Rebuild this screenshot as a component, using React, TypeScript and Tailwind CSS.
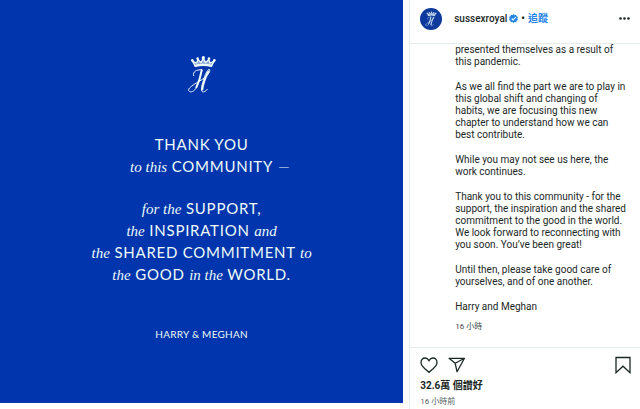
import type { ReactNode } from "react";

interface ChildrenProps {
  children: ReactNode;
}

const caption: string[][] = [
  ["presented themselves as a result of", "this pandemic."],
  [
    "As we all find the part we are to play in",
    "this global shift and changing of",
    "habits, we are focusing this new",
    "chapter to understand how we can",
    "best contribute.",
  ],
  ["While you may not see us here, the", "work continues."],
  [
    "Thank you to this community - for the",
    "support, the inspiration and the shared",
    "commitment to the good in the world.",
    "We look forward to reconnecting with",
    "you soon. You’ve been great!",
  ],
  [
    "Until then, please take good care of",
    "yourselves, and of one another.",
  ],
  ["Harry and Meghan"],
];

const Monogram: React.FC<{ className: string }> = ({ className }) => (
  <svg
    viewBox="48 30 90 120"
    className={className}
    fill="none"
    stroke="currentColor"
    strokeLinecap="round"
    strokeLinejoin="round"
    aria-hidden="true"
  >
    {/* Crown */}
    <path
      d="M72 62 L64 48 L77 54 L81 43 L90 53 L97 40 L104 53 L113 43 L117 54 L130 48 L122 62 Q97 55 72 62Z"
      fill="currentColor"
      fillOpacity="0.6"
      strokeWidth="4"
    />
    <path d="M73 63 Q97 57 121 63" strokeWidth="6" />
    <g fill="currentColor" stroke="none">
      <circle cx="64" cy="46" r="4" />
      <circle cx="80" cy="41" r="4" />
      <circle cx="97" cy="38" r="5" />
      <circle cx="114" cy="41" r="4" />
      <circle cx="130" cy="46" r="4" />
    </g>
    {/* Cipher */}
    <path
      d="M68 92 C64 80 76 74 93 74 C90 92 84 112 77 126 C71 139 58 145 53 137 C51 130 63 122 76 114 C91 106 102 98 110 89 C116 82 118 75 115 73 C109 73 101 91 97 107 C92 122 89 136 94 140 C98 143 105 138 109 133"
      strokeWidth="3"
    />
    <path d="M92 76 C89 92 83 112 76 127" strokeWidth="6" />
    <path d="M112 80 C104 96 96 115 94 133" strokeWidth="6" />
  </svg>
);

const Small: React.FC<ChildrenProps> = ({ children }) => (
  <em className="font-['Liberation_Serif',serif] leading-none tracking-normal">
    {children}
  </em>
);

const Card = () => (
  <section className="flex aspect-square flex-col items-center bg-[#0035ad] pt-[55px] text-center font-[Lato,sans-serif] text-[#eefaf6]">
    <Monogram className="h-10 w-[30px]" />
    <div className="mt-[38px] text-[15px] leading-[22px] tracking-wider whitespace-nowrap">
      <p>THANK YOU</p>
      <p>
        <Small>to this</Small> COMMUNITY
        <span className="inline-block w-0 font-light">&nbsp;—</span>
      </p>
    </div>
    <div className="mt-5 text-[15px] leading-[22px] tracking-wider whitespace-nowrap">
      <p>
        <Small>for the</Small> SUPPORT,
      </p>
      <p>
        <Small>the</Small> INSPIRATION <Small>and</Small>
      </p>
      <p>
        <Small>the</Small> SHARED COMMITMENT <Small>to</Small>
      </p>
      <p>
        <Small>the</Small> GOOD <Small>in the</Small> WORLD.
      </p>
    </div>
    <p className="mt-10 text-[10px] leading-[18px] tracking-wide">
      HARRY &amp; MEGHAN
    </p>
  </section>
);

const Header = () => (
  <header className="flex h-11 items-center border-b border-[#e4ecea] pr-[10px] pb-[6px] pl-[10px]">
    <span className="flex h-[22px] w-[22px] items-center justify-center rounded-full bg-[#0d3a9c] text-[#e2f4fa]">
      <Monogram className="h-4 w-3" />
    </span>
    <a href="#profile" className="ml-3 text-[10px] font-medium">
      sussexroyal
    </a>
    <svg viewBox="0 0 24 24" className="ml-[2px] h-[9px] w-[9px]" role="img" aria-label="Verified">
      <path
        d="M12 0l3 3 4-1 1 4 4 2-2 4 2 4-4 2-1 4-4-1-3 3-3-3-4 1-1-4-4-2 2-4-2-4 4-2 1-4 4 1z"
        fill="#2583e6"
      />
      <path d="M7 12l4 4 7-8" fill="none" stroke="#fff" strokeWidth="3" />
    </svg>
    <span className="mx-[3px] text-[10px] font-bold">•</span>
    <button className="text-[10px] font-semibold text-[#2583e6]">追蹤</button>
    <button className="ml-auto" aria-label="More options">
      <svg viewBox="0 0 11 3" className="h-[3px] w-[11px]" fill="currentColor">
        <circle cx="1.5" cy="1.5" r="1.3" />
        <circle cx="5.5" cy="1.5" r="1.3" />
        <circle cx="9.5" cy="1.5" r="1.3" />
      </svg>
    </button>
  </header>
);

const Actions = () => (
  <footer className="border-t border-[#e4ecea] pt-2 pr-2 pl-[10px]">
    <div className="flex items-center">
      <button aria-label="Like">
        <svg viewBox="0 0 18 18" className="h-[18px] w-[18px]" fill="none" stroke="currentColor" strokeWidth="1.3">
          <path d="M9 4.7C8.1 3 6.8 2 5.1 2 2.7 2 1 3.9 1 6.5c0 2.9 2 4.5 4.3 6.6L9 16.3l3.7-3.2C15 11 17 9.4 17 6.5 17 3.9 15.3 2 12.9 2 11.2 2 9.9 3 9 4.7z" />
        </svg>
      </button>
      <button className="ml-[10px]" aria-label="Share">
        <svg
          viewBox="0 0 18 18"
          className="h-[18px] w-[18px]"
          fill="none"
          stroke="currentColor"
          strokeWidth="1.3"
          strokeLinejoin="round"
        >
          <path d="M1 2.3h15.5L9 15.7 7.2 7.3zM7.2 7.3l9.3-5" />
        </svg>
      </button>
      <button className="ml-auto" aria-label="Save">
        <svg viewBox="0 0 18 18" className="h-[18px] w-[18px]" fill="none" stroke="currentColor" strokeWidth="1.3">
          <path d="M2 1.5h14v15.2l-7-6.5-7 6.5z" />
        </svg>
      </button>
    </div>
    <p className="mt-1 text-[10px] leading-4 font-bold">32.6萬 個讚好</p>
    <p className="text-[8px] leading-4 text-[#56625f]">16 小時前</p>
  </footer>
);

const App = () => {
  return (
    <main className="grid grid-cols-[63%_1fr] items-start gap-[6px] overflow-hidden bg-white">
      <Card />
      <article className="border-l border-[#e4f2f0] font-[Roboto,'Noto_Sans_CJK_TC',sans-serif] text-[#1b2826]">
        <Header />
        <div className="pr-2 pl-[45px]">
          <div className="flex flex-col gap-[13px] text-[10px] leading-3 whitespace-nowrap">
            {caption.map((lines) => (
              <p key={lines[0]}>
                {lines.map((line) => (
                  <span key={line} className="block">
                    {line}
                  </span>
                ))}
              </p>
            ))}
          </div>
          <p className="pt-2 pb-[14px] text-[8px] leading-3 text-[#3c4946]">16 小時</p>
        </div>
        <Actions />
      </article>
    </main>
  );
};

export default App;
